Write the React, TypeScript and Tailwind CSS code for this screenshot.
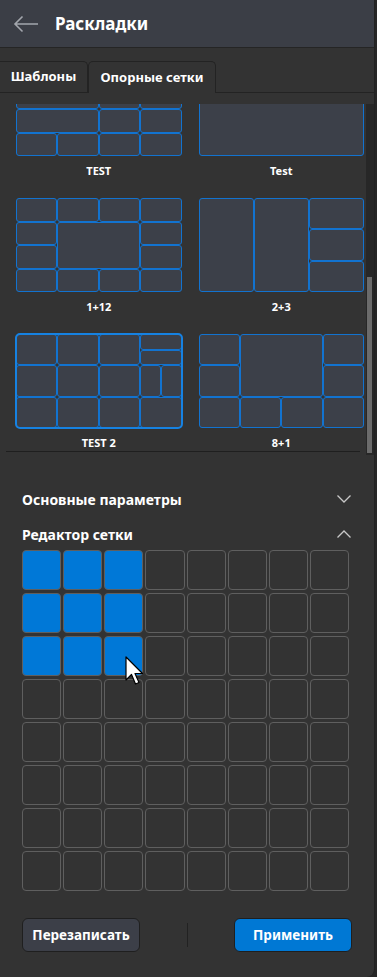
import React from "react";

type Cell = [number, number, number?, number?];

type Layout = {
  name: string;
  cols: number;
  rows: number;
  cells: Cell[];
  selected?: boolean;
};

const fourByFour = (skip: (c: number, r: number) => boolean): Cell[] => {
  const out: Cell[] = [];
  for (let r = 1; r <= 4; r++) for (let c = 1; c <= 4; c++) if (!skip(c, r)) out.push([c, r]);
  return out;
};

const layouts: Layout[] = [
  {
    name: "TEST",
    cols: 4,
    rows: 4,
    cells: [
      [1, 1, 2], [3, 1], [4, 1],
      [1, 2, 2], [3, 2], [4, 2],
      [1, 3, 2], [3, 3], [4, 3],
      [1, 4], [2, 4], [3, 4], [4, 4],
    ],
  },
  { name: "Test", cols: 1, rows: 1, cells: [[1, 1]] },
  {
    name: "1+12",
    cols: 4,
    rows: 4,
    cells: [[2, 2, 2, 2], ...fourByFour((c, r) => c >= 2 && c <= 3 && r >= 2 && r <= 3)],
  },
  {
    name: "2+3",
    cols: 3,
    rows: 3,
    cells: [[1, 1, 1, 3], [2, 1, 1, 3], [3, 1], [3, 2], [3, 3]],
  },
  {
    name: "TEST 2",
    cols: 8,
    rows: 6,
    selected: true,
    cells: [
      [1, 1, 2, 2], [3, 1, 2, 2], [5, 1, 2, 2], [7, 1, 2, 1], [7, 2, 2, 1],
      [1, 3, 2, 2], [3, 3, 2, 2], [5, 3, 2, 2], [7, 3, 1, 2], [8, 3, 1, 2],
      [1, 5, 2, 2], [3, 5, 2, 2], [5, 5, 2, 2], [7, 5, 2, 2],
    ],
  },
  {
    name: "8+1",
    cols: 4,
    rows: 3,
    cells: [[1, 1], [2, 1, 2, 2], [4, 1], [1, 2], [4, 2], [1, 3], [2, 3], [3, 3], [4, 3]],
  },
];

function Thumb({ layout }: { layout: Layout }) {
  return (
    <div className="flex flex-col items-center">
      <div
        className={`grid h-[94px] w-full ${
          layout.selected ? "rounded-[4px] outline-2 -outline-offset-1 outline-[#1682e2]" : ""
        }`}
        style={{
          gridTemplateColumns: `repeat(${layout.cols}, 1fr)`,
          gridTemplateRows: `repeat(${layout.rows}, 1fr)`,
        }}
      >
        {layout.cells.map(([c, r, cs = 1, rs = 1], i) => (
          <div
            key={i}
            className="rounded-[3px] border border-[#1273d0] bg-[#3c4049]"
            style={{ gridColumn: `${c} / span ${cs}`, gridRow: `${r} / span ${rs}` }}
          />
        ))}
      </div>
      <div className="mt-[7px] h-4 text-[11px] leading-4 font-bold text-white">{layout.name}</div>
    </div>
  );
}

function Chevron({ up }: { up?: boolean }) {
  return (
    <svg width="16" height="10" viewBox="0 0 16 10" className="text-[#c8c8c8]">
      <path
        d={up ? "M1.5 8.5 L8 2 L14.5 8.5" : "M1.5 1.5 L8 8 L14.5 1.5"}
        fill="none"
        stroke="currentColor"
        strokeWidth="1.3"
      />
    </svg>
  );
}

const selectedCells = (r: number, c: number) => r < 3 && c < 3;

export default function App() {
  return (
    <div className="h-[977px] w-[377px] bg-[#262626] font-['Noto_Sans',sans-serif]">
      <div className="relative flex h-full w-[375px] flex-col overflow-hidden rounded-br-lg border-r border-[#222] bg-[#333333]">
        {/* header */}
        <div className="flex h-[48px] shrink-0 items-center border-b border-[#252525] bg-[#3b3e46]">
          <svg width="26" height="18" viewBox="0 0 26 18" className="ml-[13px] text-[#a3a6ad]">
            <path d="M25 9 H2 M9.5 1.5 L2 9 L9.5 16.5" fill="none" stroke="currentColor" strokeWidth="1.6" />
          </svg>
          <h1 className="ml-[16px] text-[17px] font-bold text-white">Раскладки</h1>
        </div>

        {/* tabs */}
        <div className="mt-[13px] flex h-[32px] shrink-0 border-b border-[#232323]">
          <div className="flex w-[88px] items-center justify-center rounded-tr-[5px] border-t border-r border-[#232323] text-[13px] font-bold text-white">
            Шаблоны
          </div>
          <div className="-mb-px flex w-[128px] items-center justify-center rounded-t-[5px] border-x border-t border-[#232323] bg-[#333333] text-[13px] font-bold text-white">
            Опорные сетки
          </div>
        </div>

        {/* scroll list */}
        <div className="mt-[11px] flex h-[351px] shrink-0">
          <div className="flex-1 overflow-hidden">
            <div className="-mt-[42px] grid grid-cols-2 gap-x-[17px] gap-y-[19px] pl-[16px] pr-[2px]">
              {layouts.map((l) => (
                <Thumb key={l.name} layout={l} />
              ))}
            </div>
            <div className="mx-[6px] border-t border-[#1f1f1f]" />
          </div>
          <div className="flex w-[8px] flex-col bg-[#272727] pr-[2px] pl-[1px]">
            <div className="mt-[173px] h-[176px] bg-[#6b6b6b]" />
          </div>
        </div>

        {/* sections */}
        <div className="px-[22px]">
          <div className="mt-[34px] flex h-[20px] items-center justify-between">
            <span className="text-[14px] font-bold text-white">Основные параметры</span>
            <Chevron />
          </div>
          <div className="mt-[15px] flex h-[20px] items-center justify-between">
            <span className="text-[14px] font-bold text-white">Редактор сетки</span>
            <Chevron up />
          </div>

          <div className="relative mt-[6px] grid w-[327px] grid-cols-8 gap-x-[2px] gap-y-[3px]">
            {Array.from({ length: 64 }).map((_, i) => {
              const r = Math.floor(i / 8);
              const c = i % 8;
              return (
                <div
                  key={i}
                  className={`h-[40px] rounded-[4px] border-[1.5px] border-[#5f5f5f] ${
                    selectedCells(r, c) ? "bg-[#0078d7]" : "bg-[#333333]"
                  }`}
                />
              );
            })}
            <svg
              width="19"
              height="30"
              viewBox="0 0 19 30"
              className="absolute top-[106px] left-[103px]"
            >
              <path
                d="M1 1 L1 24 L6.5 18.5 L10.5 28 L14 26.5 L10 17.5 L17.5 17.5 Z"
                fill="#ffffff"
                stroke="#000000"
                strokeWidth="1.2"
                strokeLinejoin="round"
              />
            </svg>
          </div>

          {/* buttons */}
          <div className="mt-[27px] flex items-center justify-between">
            <button className="h-[34px] w-[118px] rounded-[6px] border border-[#1f1f1f] bg-[#3c3f48] text-[13.5px] font-bold text-white">
              Перезаписать
            </button>
            <div className="h-[24px] w-px bg-[#222]" />
            <button className="h-[34px] w-[118px] rounded-[6px] border border-[#1f1f1f] bg-[#0078d4] text-[13.5px] font-bold text-white">
              Применить
            </button>
          </div>
        </div>
      </div>
    </div>
  );
}
